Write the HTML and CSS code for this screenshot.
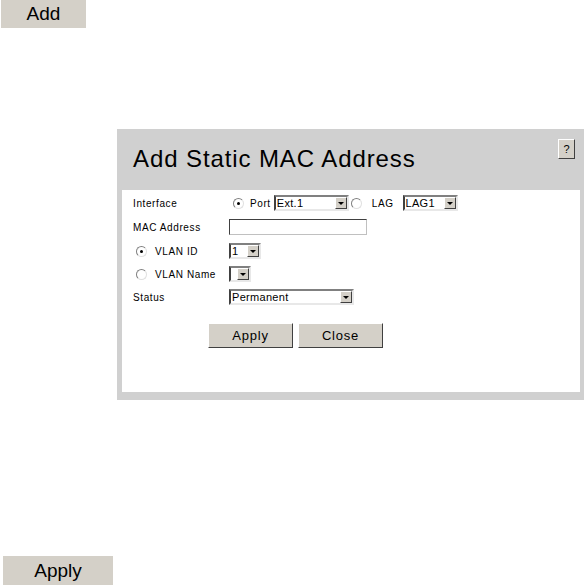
FILE: index.html
```html
<!DOCTYPE html>
<html lang="en">
<head>
    <meta charset="UTF-8">
    <title>Add Static MAC Address</title>
    <link rel="stylesheet" href="styles.css">
</head>
<body>

    <div class="btn btn-top">Add</div>

    <div class="dialog">
        <div class="dialog-head">
            <h2>Add Static MAC Address</h2>
            <div class="help">?</div>
        </div>
        <div class="panel">
            <div class="form">
                <div class="label">Interface</div>
                <div class="ctrl">
                    <span class="radio on"></span>
                    <span class="txt">Port</span>
                    <span class="select w-ext"><span class="val">Ext.1</span><span class="arrow"></span></span>
                    <span class="radio"></span>
                    <span class="txt lag">LAG</span>
                    <span class="select w-lag"><span class="val">LAG1</span><span class="arrow"></span></span>
                </div>

                <div class="label">MAC Address</div>
                <div class="ctrl"><span class="input"></span></div>

                <div class="label"><span class="radio on"></span><span class="txt">VLAN ID</span></div>
                <div class="ctrl"><span class="select w-id"><span class="val">1</span><span class="arrow"></span></span></div>

                <div class="label"><span class="radio"></span><span class="txt">VLAN Name</span></div>
                <div class="ctrl"><span class="select w-name"><span class="val"></span><span class="arrow"></span></span></div>

                <div class="label">Status</div>
                <div class="ctrl"><span class="select w-status"><span class="val">Permanent</span><span class="arrow"></span></span></div>
            </div>

            <div class="actions">
                <div class="btn btn-dlg">Apply</div>
                <div class="btn btn-dlg">Close</div>
            </div>
        </div>
    </div>

    <div class="btn btn-bottom">Apply</div>

</body>
</html>
```

FILE: styles.css
```css
body {
    margin: 0;
    width: 587px;
    height: 585px;
    overflow: hidden;
    background: #fff;
    font-family: "Liberation Sans", Arial, sans-serif;
    color: #000;
}
.btn {
    background: #d4d0c8;
    display: flex;
    align-items: center;
    justify-content: center;
    font-size: 19px;
}
.btn-top {
    margin-left: 1px;
    width: 85px;
    height: 28px;
}
.btn-bottom {
    margin: 156px 0 0 3px;
    width: 110px;
    height: 29px;
}
.dialog {
    margin: 101px 0 0 117px;
    width: 467px;
    height: 271px;
    background: #d0d0d0;
    padding: 0 4px 8px 5px;
    box-sizing: border-box;
    display: flex;
    flex-direction: column;
}
.dialog-head {
    height: 61px;
    display: flex;
    align-items: flex-start;
    justify-content: space-between;
}
.dialog-head h2 {
    margin: 16px 0 0 11px;
    font-size: 24px;
    font-weight: normal;
    letter-spacing: 0.9px;
}
.help {
    margin: 10px 5px 0 0;
    width: 17px;
    height: 20px;
    box-sizing: border-box;
    border: 1px solid;
    border-color: #fff #404040 #404040 #fff;
    background: #d4d0c8;
    font-size: 11px;
    display: flex;
    align-items: center;
    justify-content: center;
}
.panel {
    flex: 1;
    background: #fff;
    padding: 1px 0 0 11px;
}
.form {
    display: grid;
    grid-template-columns: 96px auto;
    grid-template-rows: 24px 24px 24px 22px 24px;
    align-items: center;
    font-size: 10px;
    letter-spacing: 0.6px;
}
.form .label, .form .ctrl {
    display: flex;
    align-items: center;
}
.form .label .radio {
    margin-left: 3px;
    margin-right: 8px;
}
.txt {
    margin-right: 3px;
}
.ctrl .radio:first-child {
    margin-left: 4px;
    margin-right: 6px;
}
.ctrl .radio {
    margin: 0 10px 0 2px;
}
.lag {
    margin-right: 9px;
}
.radio {
    width: 9px;
    height: 9px;
    border-radius: 50%;
    border: 1px solid;
    border-color: #808080 #e0e0e0 #e0e0e0 #808080;
    background: #fff;
    position: relative;
    flex: none;
}
.radio.on::after {
    content: "";
    position: absolute;
    left: 3px;
    top: 3px;
    width: 3px;
    height: 3px;
    background: #000;
    border-radius: 50%;
}
.select, .input {
    display: inline-flex;
    height: 16px;
    box-sizing: border-box;
    border: 2px solid;
    border-color: #808080 #e8e8e8 #e8e8e8 #404040;
    background: #fff;
    flex: none;
}
.input {
    width: 138px;
    border-width: 1px;
    border-color: #404040 #c0c0c0 #c0c0c0 #404040;
}
.select .val {
    flex: 1;
    font-size: 11px;
    line-height: 12px;
    padding-left: 1px;
    letter-spacing: 0.3px;
}
.select .arrow {
    width: 12px;
    background: #d4d0c8;
    border: 1px solid;
    border-color: #fff #404040 #404040 #fff;
    box-sizing: border-box;
    position: relative;
}
.select .arrow::after {
    content: "";
    position: absolute;
    left: 2px;
    top: 4px;
    border-left: 3px solid transparent;
    border-right: 3px solid transparent;
    border-top: 3px solid #000;
}
.w-ext { width: 75px; }
.w-lag { width: 55px; }
.w-id { width: 32px; }
.w-name { width: 22px; }
.w-status { width: 125px; }
.actions {
    display: flex;
    gap: 5px;
    margin: 14px 0 0 75px;
}
.btn-dlg {
    width: 85px;
    height: 25px;
    box-sizing: border-box;
    border: 1px solid;
    border-color: #fff #404040 #404040 #fff;
    font-size: 13px;
    letter-spacing: 0.8px;
}
```
